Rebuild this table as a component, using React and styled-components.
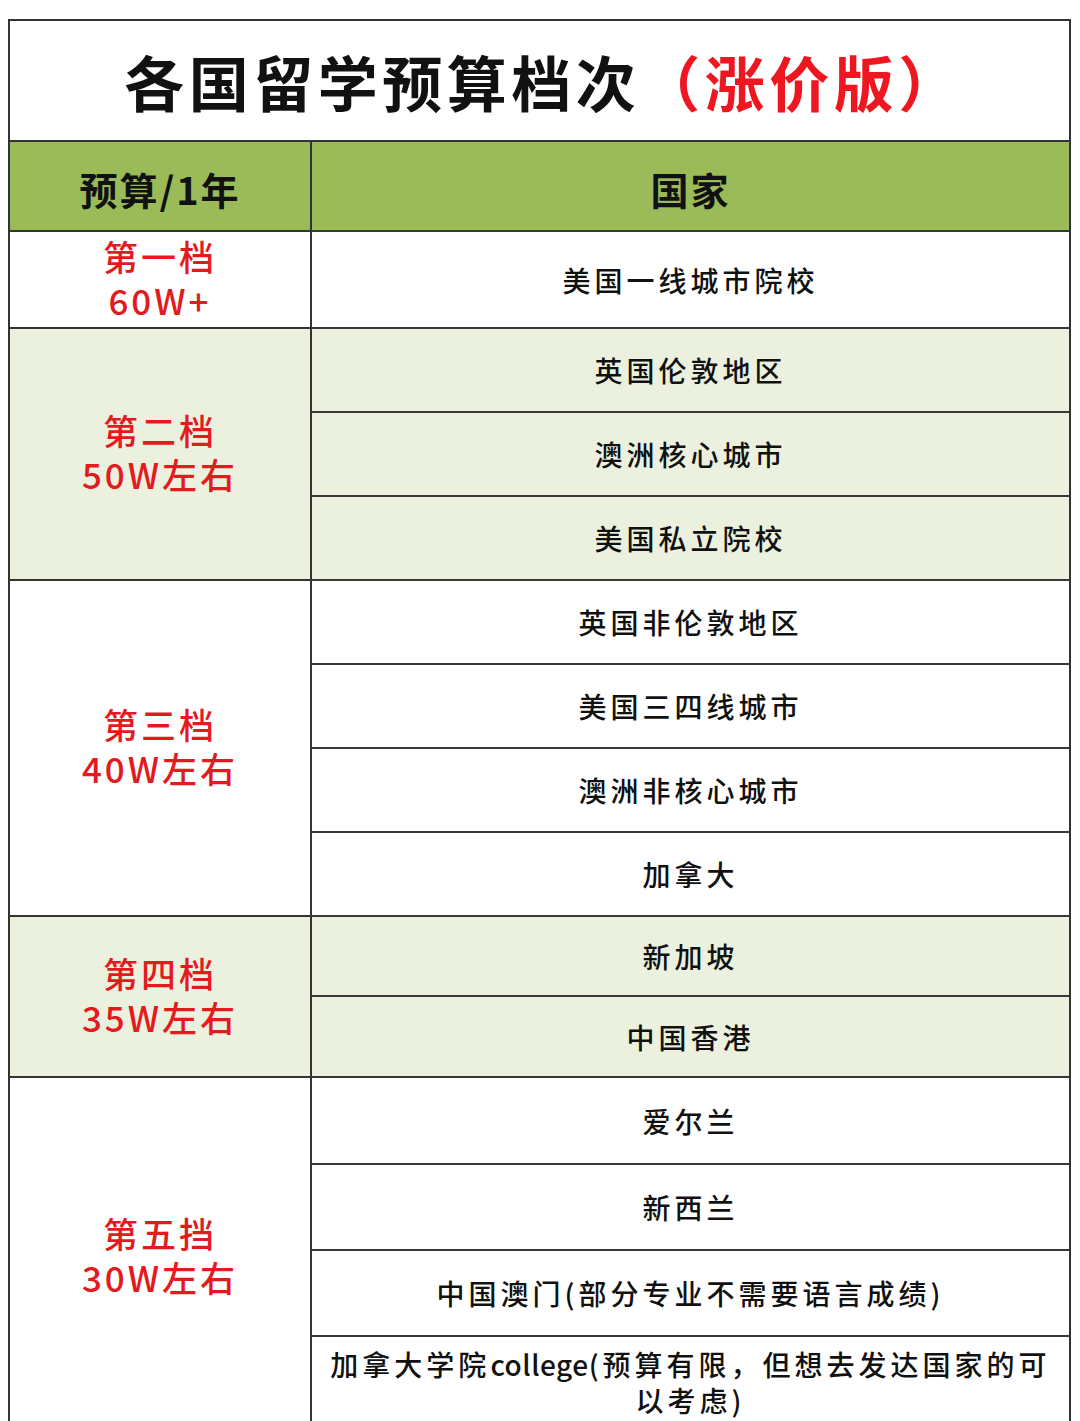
import styled, { createGlobalStyle } from "styled-components";

const GlobalStyle = createGlobalStyle`
  html, body {
    margin: 0;
    padding: 0;
    background: #fff;
  }
  body {
    font-family: "Noto Sans CJK SC", "Noto Sans", sans-serif;
    color: #111;
  }
`;

const tiers = [
  { name: "第一档", price: "60W+", shade: false, rows: [["美国一线城市院校", 97]] },
  {
    name: "第二档",
    price: "50W左右",
    shade: true,
    rows: [
      ["英国伦敦地区", 84],
      ["澳洲核心城市", 84],
      ["美国私立院校", 84],
    ],
  },
  {
    name: "第三档",
    price: "40W左右",
    shade: false,
    rows: [
      ["英国非伦敦地区", 84],
      ["美国三四线城市", 84],
      ["澳洲非核心城市", 84],
      ["加拿大", 84],
    ],
  },
  {
    name: "第四档",
    price: "35W左右",
    shade: true,
    rows: [
      ["新加坡", 80],
      ["中国香港", 81],
    ],
  },
  {
    name: "第五挡",
    price: "30W左右",
    shade: false,
    rows: [
      ["爱尔兰", 87],
      ["新西兰", 86],
      ["中国澳门(部分专业不需要语言成绩)", 86],
    ],
  },
];

const Page = styled.div`
  padding: 19px 8px 0 8px;
`;

const Sheet = styled.div`
  width: 1063px;
  border: 2px solid #333;
  border-bottom: none;
  box-sizing: border-box;
`;

const TitleRow = styled.div`
  height: 119px;
  display: flex;
  align-items: center;
  justify-content: center;
  font-size: 60px;
  font-weight: 700;
  letter-spacing: 4.5px;
  padding-left: 8px;
`;

const Red = styled.span`
  color: #ee1620;
`;

const HeaderRow = styled.div`
  display: grid;
  grid-template-columns: 302px 1fr;
  height: 90px;
  box-sizing: border-box;
  border-top: 2px solid #333;
  background: #9bbb59;
`;

const HeaderCell = styled.div`
  display: flex;
  align-items: center;
  justify-content: center;
  font-size: 38px;
  font-weight: 700;
  letter-spacing: 2px;
  padding-top: 4px;
  ${(p) => p.$divider && "border-right: 2px solid #333;"}
`;

const Tier = styled.div`
  display: grid;
  grid-template-columns: 302px 1fr;
  background: ${(p) => (p.$shade ? "#ebf1de" : "#fff")};
`;

const TierLabel = styled.div`
  display: flex;
  flex-direction: column;
  align-items: center;
  justify-content: center;
  border-top: 2px solid #333;
  border-right: 2px solid #333;
  color: #e31b1f;
  font-size: 35px;
  font-weight: 500;
  letter-spacing: 3px;
  line-height: 44px;
  padding-bottom: 4px;
`;

const Items = styled.div`
  display: flex;
  flex-direction: column;
`;

const Item = styled.div`
  box-sizing: border-box;
  height: ${(p) => p.$h}px;
  border-top: 2px solid #383838;
  display: flex;
  flex-direction: column;
  align-items: center;
  justify-content: center;
  font-size: 28px;
  font-weight: 500;
  letter-spacing: 4px;
  line-height: 36px;
  white-space: nowrap;
  text-align: center;
`;

const NoteItem = styled(Item)`
  justify-content: flex-start;
  padding-top: 9px;
  letter-spacing: 4px;
`;

const Latin = styled.span`
  letter-spacing: 0.5px;
`;

const Line = styled.span`
  display: block;
`;

export default function App() {
  return (
    <>
      <GlobalStyle />
      <Page>
        <Sheet>
          <TitleRow>
            各国留学预算档次<Red>（涨价版）</Red>
          </TitleRow>
          <HeaderRow>
            <HeaderCell $divider>预算/1年</HeaderCell>
            <HeaderCell>国家</HeaderCell>
          </HeaderRow>
          {tiers.map((t, ti) => (
            <Tier key={t.name} $shade={t.shade}>
              <TierLabel>
                <span>{t.name}</span>
                <span>{t.price}</span>
              </TierLabel>
              <Items>
                {t.rows.map(([text, h], i) => (
                  <Item key={i} $h={h}>
                    {text}
                  </Item>
                ))}
                {ti === tiers.length - 1 && (
                  <NoteItem $h={100}>
                    <Line>
                      加拿大学院<Latin>college</Latin>(预算有限，但想去发达国家的可
                    </Line>
                    <Line>以考虑)</Line>
                  </NoteItem>
                )}
              </Items>
            </Tier>
          ))}
        </Sheet>
      </Page>
    </>
  );
}
